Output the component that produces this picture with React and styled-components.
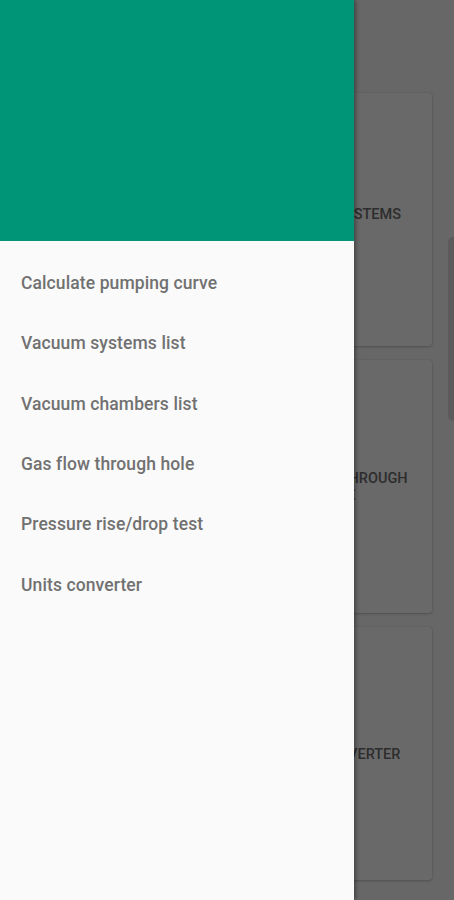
import React from "react";
import styled, { createGlobalStyle } from "styled-components";

const Global = createGlobalStyle`
  html, body { margin: 0; padding: 0; }
  body {
    width: 454px;
    height: 900px;
    overflow: hidden;
    background: #fafafa;
    font-family: Roboto, "Noto Sans", Arial, sans-serif;
  }
`;

const Screen = styled.div`
  position: relative;
  width: 454px;
  height: 900px;
  overflow: hidden;
  background: #fafafa;
`;

const CardList = styled.div`
  display: flex;
  flex-direction: column;
  gap: 14px;
  padding: 93px 22px 0 22px;
`;

const Card = styled.div`
  height: 253px;
  display: grid;
  grid-template-columns: 1fr 190px;
  align-items: center;
  background: #ffffff;
  border-radius: 3px;
  box-shadow: 0 1px 3px rgba(0, 0, 0, 0.22), 0 0 1px rgba(0, 0, 0, 0.2);
`;

const CardPicture = styled.div`
  height: 100%;
`;

const CardTitle = styled.div`
  justify-self: center;
  max-width: 150px;
  font-size: 14.5px;
  font-weight: 500;
  line-height: 17px;
  color: #6e6e6e;
  text-align: center;
  margin-top: ${(p) => p.$offset || 0}px;
`;

const Scrim = styled.div`
  position: absolute;
  inset: 0;
  background: rgba(0, 0, 0, 0.59);
`;

const Handle = styled.div`
  position: absolute;
  left: 448px;
  top: 237px;
  width: 10px;
  height: 184px;
  border-radius: 5px;
  background: #dcdcdc;
`;

const Drawer = styled.nav`
  position: absolute;
  left: 0;
  top: 0;
  width: 354px;
  height: 900px;
  background: #fafafa;
  display: flex;
  flex-direction: column;
  box-shadow: 2px 0 4px rgba(0, 0, 0, 0.35);
`;

const DrawerHeader = styled.div`
  height: 241px;
  flex-shrink: 0;
  background: #009577;
`;

const Menu = styled.ul`
  list-style: none;
  margin: 0;
  padding: 12px 0 0 0;
`;

const MenuItem = styled.li`
  height: 60.3px;
  display: flex;
  align-items: center;
  padding-left: 21px;
  font-size: 17.5px;
  font-weight: 500;
  color: #717171;
  letter-spacing: 0.1px;
`;

const cards = [
  { title: "VACUUM SYSTEMS", offset: -10 },
  { title: "GAS FLOW THROUGH HOLE", offset: 1 },
  { title: "UNITS CONVERTER", offset: 2 },
];

const items = [
  "Calculate pumping curve",
  "Vacuum systems list",
  "Vacuum chambers list",
  "Gas flow through hole",
  "Pressure rise/drop test",
  "Units converter",
];

export default function App() {
  return (
    <>
      <Global />
      <Screen>
        <CardList>
          {cards.map((c) => (
            <Card key={c.title}>
              <CardPicture />
              <CardTitle $offset={c.offset}>{c.title}</CardTitle>
            </Card>
          ))}
        </CardList>
        <Handle />
        <Scrim />
        <Drawer>
          <DrawerHeader />
          <Menu>
            {items.map((t) => (
              <MenuItem key={t}>{t}</MenuItem>
            ))}
          </Menu>
        </Drawer>
      </Screen>
    </>
  );
}
